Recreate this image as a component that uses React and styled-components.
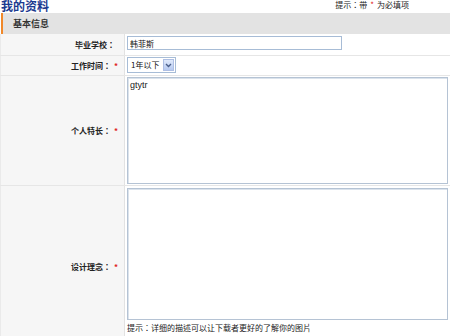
import React from 'react';
import styled, { createGlobalStyle } from 'styled-components';

const GlobalStyle = createGlobalStyle`
  body {
    margin: 0;
    background: #fff;
    font-family: "Noto Sans CJK TC", "Liberation Sans", sans-serif;
    color: #222;
  }
`;

const Page = styled.div`
  width: 450px;
  overflow: hidden;
`;

const TopBar = styled.div`
  display: flex;
  justify-content: space-between;
  align-items: flex-start;
  height: 13px;
`;

const Title = styled.h1`
  margin: 0 0 0 1px;
  font-family: "Noto Sans CJK SC", sans-serif;
  font-size: 12px;
  line-height: 12px;
  font-weight: bold;
  color: #1b3a8f;
`;

const TopHint = styled.div`
  margin: 0 41px 0 0;
  font-size: 8px;
  line-height: 10px;
  color: #222;
`;

const Star = styled.span`
  color: #e02020;
  margin: 0 ${(p) => (p.$gap ? '3px' : '0')};
`;

const SectionHead = styled.div`
  height: 21px;
  margin-left: 1px;
  border-left: 2px solid #f0882a;
  background: #e3e3e3;
  padding-left: 10px;
  font-family: "Noto Sans CJK SC", sans-serif;
  font-size: 9px;
  font-weight: bold;
  line-height: 21px;
  color: #333;
`;

const Row = styled.div`
  display: grid;
  grid-template-columns: 125px 1fr;
  height: ${(p) => p.$h}px;
  border-bottom: 1px solid #e6e6e6;
`;

const Label = styled.div`
  display: flex;
  align-items: center;
  justify-content: flex-end;
  padding-right: ${(p) => (p.$req ? '3px' : '9px')};
  background: #f6f6f6;
  border-right: 1px solid #e2e2e2;
  border-left: 1px solid #eaeaea;
  font-size: 8px;
  font-weight: bold;
  color: #222;
`;

const Field = styled.div`
  padding: ${(p) => p.$pad || '2px 3px 0 2px'};
  display: flex;
  flex-direction: column;
  align-items: flex-start;
`;

const TextInput = styled.input`
  box-sizing: border-box;
  width: 215px;
  height: 14px;
  margin: 0;
  padding: 0 2px;
  border: 1px solid #a7bcd6;
  font-family: "Noto Sans CJK SC", sans-serif;
  font-size: 8px;
  color: #111;
  outline: none;
`;

const SelectBox = styled.div`
  position: relative;
  box-sizing: border-box;
  width: 49px;
  height: 16px;
  border: 1px solid #a7bcd6;
  background: #fff;
  font-family: "Noto Sans CJK SC", sans-serif;
  font-size: 8px;
  line-height: 14px;
  padding-left: 3px;
  color: #111;
`;

const SelectArrow = styled.span`
  position: absolute;
  right: 1px;
  top: 1px;
  width: 11px;
  height: 12px;
  background: linear-gradient(#dfe9fb, #b6c9f0);
  border: 1px solid #aebfe4;
  box-sizing: border-box;
  display: flex;
  align-items: center;
  justify-content: center;
`;

const Area = styled.textarea`
  box-sizing: border-box;
  width: 321px;
  height: ${(p) => p.$h}px;
  margin: 0;
  padding: 2px;
  border: 1px solid #b5c3d4;
  box-shadow: inset 1px 1px 0 #dbe3ec;
  resize: none;
  font-family: "Liberation Sans", "Noto Sans CJK SC", sans-serif;
  font-size: 9px;
  color: #222;
  outline: none;
`;

const Note = styled.div`
  margin-top: 3px;
  font-size: 8px;
  line-height: 10px;
  color: #222;
`;

export default function App() {
  return (
    <Page>
      <GlobalStyle />
      <TopBar>
        <Title>我的资料</Title>
        <TopHint>
          提示：带<Star $gap>*</Star>为必填项
        </TopHint>
      </TopBar>
      <SectionHead>基本信息</SectionHead>
      <Row $h={21}>
        <Label>毕业学校：</Label>
        <Field>
          <TextInput defaultValue="韩菲斯" />
        </Field>
      </Row>
      <Row $h={19}>
        <Label $req>
          工作时间：<Star $gap>*</Star>
        </Label>
        <Field $pad="1px 3px 0 2px">
          <SelectBox>
            1年以下
            <SelectArrow>
              <svg width="7" height="5" viewBox="0 0 7 5">
                <path d="M1 1 L3.5 3.5 L6 1" fill="none" stroke="#4a5f8a" strokeWidth="1.4" />
              </svg>
            </SelectArrow>
          </SelectBox>
        </Field>
      </Row>
      <Row $h={109}>
        <Label $req>
          个人特长：<Star $gap>*</Star>
        </Label>
        <Field $pad="1px 3px 0 2px">
          <Area $h={107} defaultValue="gtytr" />
        </Field>
      </Row>
      <Row $h={160}>
        <Label $req>
          设计理念：<Star $gap>*</Star>
        </Label>
        <Field $pad="2px 3px 0 2px">
          <Area $h={132} defaultValue="" />
          <Note>提示：详细的描述可以让下载者更好的了解你的图片</Note>
        </Field>
      </Row>
    </Page>
  );
}
